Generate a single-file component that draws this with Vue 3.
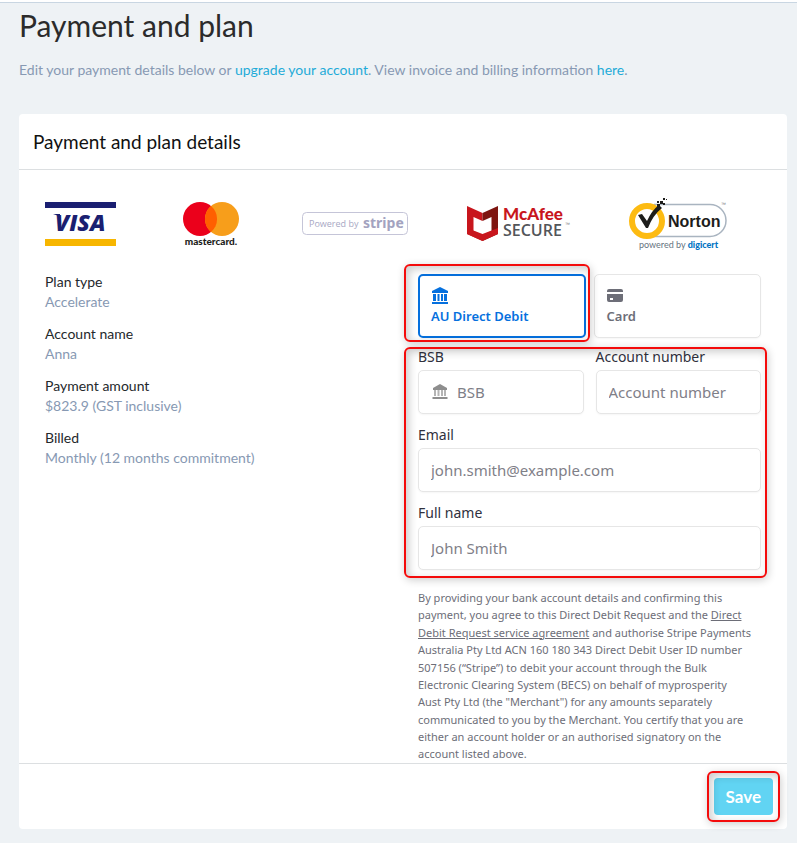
<template>
  <main class="page">
    <header class="intro">
      <h1>Payment and plan</h1>
      <p>
        Edit your payment details below or <a href="#">upgrade your account</a>. View invoice and
        billing information <a href="#">here</a>.
      </p>
    </header>

    <form class="card" @submit.prevent="save">
      <h2>Payment and plan details</h2>

      <div class="card-body">
        <div class="logos">
          <svg width="75" height="44" viewBox="0 0 75 44" role="img" aria-label="Visa">
            <rect width="71" height="6" fill="#1a1f71" />
            <rect y="37" width="71" height="7" fill="#f7b600" />
            <path d="M8 12h7v3q-3-2-7-3z" fill="#1a1f71" />
            <text x="10" y="29" class="visa">VISA</text>
          </svg>

          <svg width="64" height="46" viewBox="0 0 64 46" role="img" aria-label="Mastercard">
            <circle cx="21" cy="18" r="17" fill="#eb001b" />
            <circle cx="43" cy="18" r="17" fill="#f79e1b" />
            <path d="M32 5a17 17 0 0 1 0 26a17 17 0 0 1 0-26z" fill="#ff5f00" />
            <text x="32" y="44" class="mastercard">mastercard.</text>
          </svg>

          <svg width="106" height="24" viewBox="0 0 106 24" role="img" aria-label="Powered by Stripe">
            <rect x="0.5" y="0.5" width="105" height="22" rx="4" fill="none" stroke="#c5c5d8" />
            <text x="7" y="15" class="powered">Powered by</text>
            <text x="61" y="16" class="stripe">stripe</text>
          </svg>

          <svg width="102" height="36" viewBox="0 0 102 36" role="img" aria-label="McAfee Secure">
            <path d="M0 0l15.500 7v8l-9-4v14l9 4v6l-15.500-7z" fill="#c8161d" />
            <path d="M31 0l-15.500 7v8l9-4v14l-9 4v6l15.500-7z" fill="#7d1510" />
            <path d="M0 22l15.500 6l15.500-6v6l-15.500 7l-15.500-7z" fill="#c8161d" />
            <text x="36" y="14" class="mcafee">McAfee</text>
            <text x="36" y="30" class="secure">SECURE</text>
            <text x="98" y="20" class="tm">™</text>
          </svg>

          <svg width="99" height="52" viewBox="0 0 99 52" role="img" aria-label="Norton powered by DigiCert">
            <path d="M26 6.500h56a16 16 0 0 1 0 32h-56" fill="none" stroke="#a9b4c0" stroke-width="1.500" />
            <circle cx="19" cy="23" r="15" fill="#fff" stroke="#fdbb12" stroke-width="6" />
            <path d="M10 17l4-1l5 7q5-11 12-16l3 3q-9 7-14 20h-2z" fill="#1d1d1b" />
            <path d="M29 6h3v3h-3zM32 3h3v3h-3zM35 5h2v2h-2zM35 0h2v2h-2zM38 1h1v1h-1zM29 3h2v2h-2z" fill="#1d1d1b" />
            <text x="40" y="29" class="norton">Norton</text>
            <text x="93" y="8" class="tm">™</text>
            <text x="11" y="50" class="digicert">powered by <tspan>digicert</tspan></text>
          </svg>
        </div>

        <div class="columns">
          <dl class="plan">
            <div v-for="item in plan" :key="item.label">
              <dt>{{ item.label }}</dt>
              <dd>{{ item.value }}</dd>
            </div>
          </dl>

          <div class="payment">
            <div class="methods">
              <div class="marked marked-method">
                <button
                  type="button"
                  class="method"
                  :class="{ selected: method === 'debit' }"
                  :aria-pressed="method === 'debit'"
                  @click="method = 'debit'"
                >
                  <svg width="18" height="18" viewBox="0 0 18 18" fill="currentColor" aria-hidden="true">
                    <path d="M9 0l8 4v2h-16v-2zM2 7h3v7h-3zM6.500 7h2v7h-2zM10 7h2v7h-2zM13 7h3v7h-3zM1 15h16v2h-16z" />
                  </svg>
                  AU Direct Debit
                </button>
              </div>
              <button
                type="button"
                class="method"
                :class="{ selected: method === 'card' }"
                :aria-pressed="method === 'card'"
                @click="method = 'card'"
              >
                <svg width="18" height="18" viewBox="0 0 18 18" fill="currentColor" aria-hidden="true">
                  <path
                    fill-rule="evenodd"
                    d="M2 2h12a2 2 0 0 1 2 2v1h-16v-1a2 2 0 0 1 2-2zM0 7h16v6a2 2 0 0 1-2 2h-12a2 2 0 0 1-2-2zM3 11v2h3v-2z"
                  />
                </svg>
                Card
              </button>
            </div>

            <div class="marked marked-fields fields">
              <div class="field">
                <label for="bsb">BSB</label>
                <div class="with-icon">
                  <svg width="18" height="18" viewBox="0 0 18 18" aria-hidden="true">
                    <path d="M9 1l7 4v2h-14v-2zM1.500 14h15v2h-15z" fill="#8e8e8e" />
                    <path d="M3 7h2v6h-2zM6.500 7h2v6h-2zM10 7h2v6h-2zM13 7h2v6h-2z" fill="#b4b4b4" />
                  </svg>
                  <input id="bsb" v-model="form.bsb" type="text" placeholder="BSB" />
                </div>
              </div>
              <div class="field">
                <label for="account">Account number</label>
                <input id="account" v-model="form.account" type="text" placeholder="Account number" />
              </div>
              <div class="field wide">
                <label for="email">Email</label>
                <input id="email" v-model="form.email" type="email" placeholder="john.smith@example.com" />
              </div>
              <div class="field wide">
                <label for="name">Full name</label>
                <input id="name" v-model="form.name" type="text" placeholder="John Smith" />
              </div>
            </div>

            <p class="legal">
              By providing your bank account details and confirming this<br />
              payment, you agree to this Direct Debit Request and the
              <a href="#">Direct<br />Debit Request service agreement</a> and authorise Stripe Payments<br />
              Australia Pty Ltd ACN 160 180 343 Direct Debit User ID number<br />
              507156 (“Stripe”) to debit your account through the Bulk<br />
              Electronic Clearing System (BECS) on behalf of myprosperity<br />
              Aust Pty Ltd (the "Merchant") for any amounts separately<br />
              communicated to you by the Merchant. You certify that you are<br />
              either an account holder or an authorised signatory on the<br />
              account listed above.
            </p>
          </div>
        </div>
      </div>

      <footer>
        <div class="marked marked-save">
          <button type="submit" class="save">Save</button>
        </div>
      </footer>
    </form>
  </main>
</template>

<script setup>
import { reactive, ref } from 'vue'

const plan = [
  { label: 'Plan type', value: 'Accelerate' },
  { label: 'Account name', value: 'Anna' },
  { label: 'Payment amount', value: '$823.9 (GST inclusive)' },
  { label: 'Billed', value: 'Monthly (12 months commitment)' }
]

const method = ref('debit')

const form = reactive({
  bsb: '',
  account: '',
  email: '',
  name: ''
})

const emit = defineEmits(['save'])

const save = () => {
  emit('save', { method: method.value, ...form })
}
</script>

<style>
body {
  margin: 0;
  background: #eef2f5;
}
</style>

<style scoped>
.page {
  box-sizing: border-box;
  min-height: 100vh;
  padding: 0 10px 14px 19px;
  border-top: 2px solid #fff;
  box-shadow: inset 0 1px #c9d6e2;
  font-family: Lato, "Liberation Sans", sans-serif;
  font-size: 14px;
  color: #24282c;
}

h1 {
  margin: 0;
  padding-top: 4px;
  font-size: 30px;
  line-height: 38px;
  font-weight: 400;
  color: #2b2b2b;
}

.intro p {
  margin: 16px 0 0;
  line-height: 20px;
  color: #8799b3;
}

.intro a {
  color: #1fabd8;
  text-decoration: none;
}

.card {
  margin-top: 34px;
  background: #fff;
  border-radius: 4px;
}

h2 {
  margin: 0;
  padding: 16px 14px 15px;
  border-bottom: 1px solid #dcdfe1;
  font-size: 19px;
  line-height: 24px;
  font-weight: 400;
  color: #111;
}

.card-body {
  padding: 28px 26px 0;
}

.logos {
  display: flex;
  align-items: center;
  justify-content: space-between;
  padding-right: 34px;
  height: 52px;
}

.logos svg {
  overflow: visible;
}

.visa {
  font: italic 800 23px "Open Sans", sans-serif;
  fill: #1a1f71;
}

.mastercard {
  font: 900 10px Lato, sans-serif;
  fill: #1d1d1b;
  text-anchor: middle;
}

.powered {
  font: 500 9px "Open Sans", sans-serif;
  fill: #a8a8c4;
}

.stripe {
  font: 700 14px "Noto Sans", sans-serif;
  fill: #a3a3c0;
}

.mcafee {
  font: 900 17px Lato, sans-serif;
  fill: #c8161d;
}

.secure {
  font: 600 16px "Open Sans", sans-serif;
  fill: #53565a;
}

.tm {
  font: 5px "Liberation Sans", sans-serif;
  fill: #777;
}

.norton {
  font: 700 16px "Liberation Sans", sans-serif;
  fill: #1d1d1b;
}

.digicert {
  font: 9px Lato, sans-serif;
  fill: #667380;
}

.digicert tspan {
  font-weight: 900;
  fill: #0174c3;
}

.columns {
  display: grid;
  grid-template-columns: 1fr 1fr;
  gap: 30px;
  padding-top: 22px;
}

.plan {
  margin: 0;
  line-height: 20px;
}

.plan div {
  margin-bottom: 12px;
}

.plan dd {
  margin: 0;
  color: #8799b3;
}

.payment {
  padding-top: 2px;
}

.payment,
.payment input,
.payment button {
  font-family: "Noto Sans", "Open Sans", sans-serif;
}

.methods,
.fields {
  display: grid;
  grid-template-columns: 1fr 1fr;
}

.methods {
  gap: 8px;
}

.marked {
  position: relative;
}

.marked::after {
  content: "";
  position: absolute;
  border: 2px solid #f40b0b;
  border-radius: 6px;
  box-shadow: 1px 2px 8px rgba(0, 0, 0, 0.2), inset 3px 3px 8px rgba(0, 0, 0, 0.2);
  pointer-events: none;
}

.marked-method::after {
  inset: -10px -4px -4px -14px;
}

.marked-fields::after {
  inset: 0 -6px -8px -14px;
}

.marked-save::after {
  inset: -7px;
}

.method {
  display: flex;
  flex-direction: column;
  justify-content: center;
  gap: 1px;
  box-sizing: border-box;
  width: 100%;
  height: 64px;
  padding: 0 12px;
  background: #fff;
  border: 1px solid #e6e6e6;
  border-radius: 5px;
  box-shadow: 0 1px 2px rgba(0, 0, 0, 0.04);
  font-size: 13px;
  line-height: 20px;
  font-weight: 600;
  text-align: left;
  color: #6d6e78;
}

.method.selected {
  padding: 0 11px;
  border: 2px solid #0570de;
  color: #0570de;
}

.fields {
  gap: 11px 12px;
  margin-top: 9px;
}

.field {
  display: flex;
  flex-direction: column;
  gap: 3px;
  min-width: 0;
}

.wide {
  grid-column: 1 / -1;
}

label {
  font-size: 14px;
  line-height: 20px;
  color: #30313d;
}

input {
  box-sizing: border-box;
  width: 100%;
  height: 44px;
  padding: 0 12px;
  background: #fff;
  border: 1px solid #e6e6e6;
  border-radius: 5px;
  box-shadow: 0 1px 2px rgba(0, 0, 0, 0.04);
  font-size: 15px;
  color: #30313d;
}

input::placeholder {
  color: #7f8088;
  opacity: 1;
}

.with-icon {
  position: relative;
}

.with-icon svg {
  position: absolute;
  top: 13px;
  left: 13px;
}

.with-icon input {
  padding-left: 38px;
}

.legal {
  margin: 19px 0 0;
  font-size: 11px;
  line-height: 1.58;
  color: #6d6e78;
}

.legal a {
  color: inherit;
}

footer {
  display: flex;
  justify-content: flex-end;
  padding: 14px;
  border-top: 1px solid #dcdfe1;
}

.save {
  display: block;
  height: 37px;
  padding: 0 12px;
  background: #61d4f3;
  border: none;
  border-radius: 4px;
  font-family: inherit;
  font-size: 17px;
  font-weight: 700;
  color: #fff;
}
</style>
